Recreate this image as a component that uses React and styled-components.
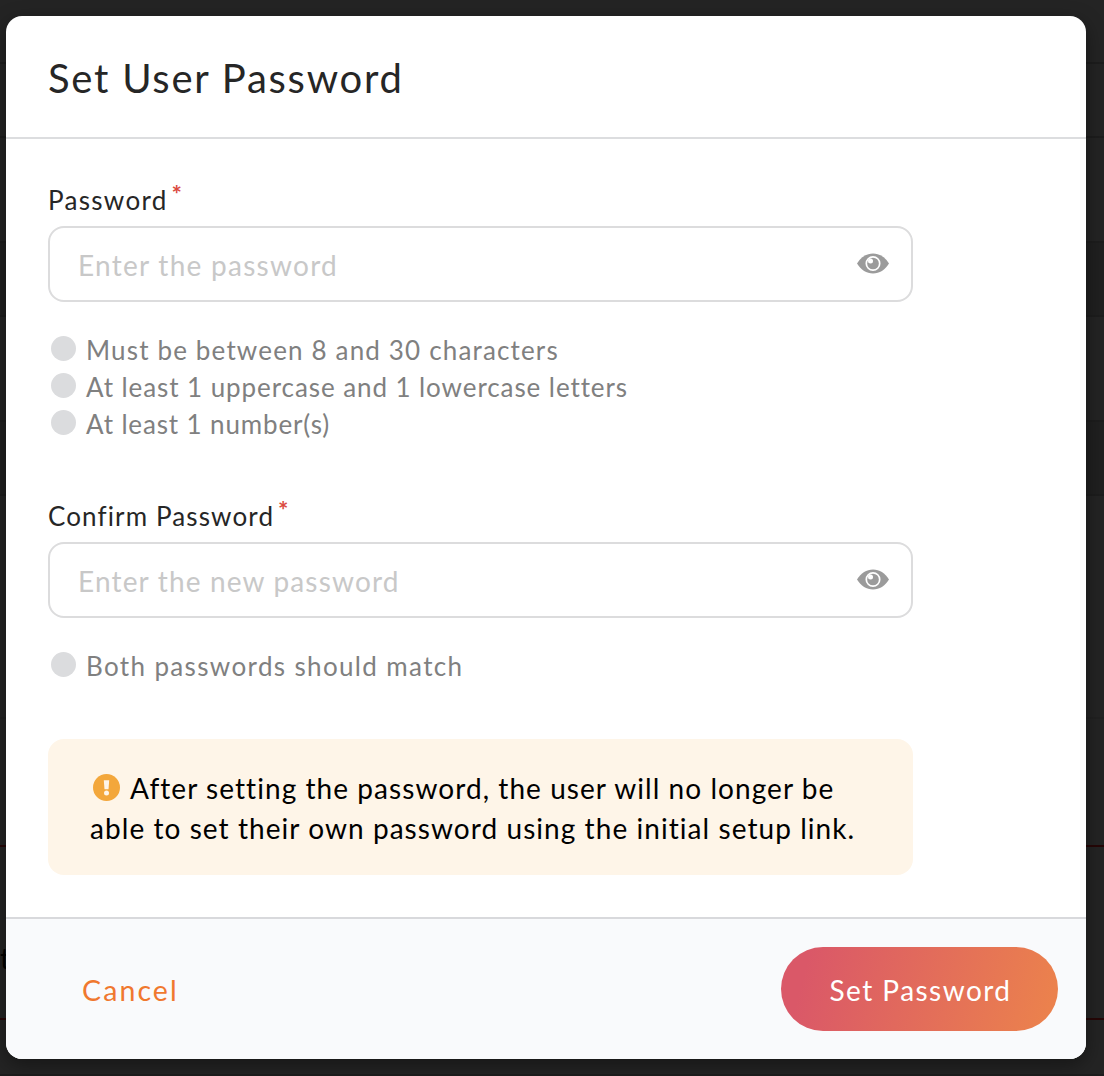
import React from "react";
import styled, { createGlobalStyle } from "styled-components";

const GlobalStyle = createGlobalStyle`
  *, *::before, *::after { box-sizing: border-box; }
  body { margin: 0; background: #242424; }
  body, button, input { font-family: Lato, "Liberation Sans", sans-serif; }
`;

const Page = styled.div`
  position: relative;
  width: 1104px;
  height: 1076px;
  overflow: hidden;
  background: #242424;
`;

const Row = styled.div`
  height: ${(p) => p.$h}px;
  background: ${(p) => p.$bg || "#242424"};
  border-bottom: 2px solid ${(p) => p.$line || "#1d1d1d"};
  display: flex;
  align-items: center;
  font-size: 28px;
  color: #000;
  & > span { padding-top: 50px; }
`;

const Dialog = styled.section`
  position: absolute;
  top: 16px;
  left: 6px;
  width: 1080px;
  height: 1043px;
  display: flex;
  flex-direction: column;
  background: #fff;
  border-radius: 16px;
  overflow: hidden;
  box-shadow: 0 6px 20px rgba(0, 0, 0, 0.4);
`;

const Header = styled.header`
  height: 123px;
  padding: 2px 42px 0;
  display: flex;
  align-items: center;
  border-bottom: 2px solid #dcdddf;
`;

const Title = styled.h1`
  margin: 0;
  font-size: 40px;
  line-height: 48px;
  font-weight: 400;
  letter-spacing: ${(p) => p.$track}px;
  color: #262626;
`;

const Body = styled.div`
  flex: 1;
  padding: 44px 42px 0;
`;

const Field = styled.div`
  width: 865px;
  height: ${(p) => p.$h}px;
`;

const Label = styled.label`
  display: flex;
  gap: 4px;
  height: 43px;
  font-size: 26px;
  line-height: 34px;
  letter-spacing: ${(p) => p.$track}px;
  color: #262626;
  white-space: nowrap;
`;

const Required = styled.span`
  color: #db4a3f;
  font-size: 20px;
  line-height: 21px;
  font-weight: 500;
  font-family: Inter, sans-serif;
  letter-spacing: 0;
`;

const InputBox = styled.div`
  height: 76px;
  padding: 0 22px 0 28px;
  display: flex;
  align-items: center;
  border: 2px solid #dcdcdd;
  border-radius: 16px;
`;

const Input = styled.input`
  flex: 1;
  min-width: 0;
  height: 40px;
  margin-top: 2px;
  padding: 0;
  border: 0;
  outline: 0;
  background: none;
  font-size: 28px;
  letter-spacing: ${(p) => p.$track}px;
  &::placeholder { color: #c8c8c8; opacity: 1; }
`;

const Rules = styled.ul`
  margin: 0;
  padding: 28px 0 0 3px;
  list-style: none;
`;

const Rule = styled.li`
  display: flex;
  align-items: center;
  gap: 10px;
  height: 37px;
  font-size: 26px;
  letter-spacing: ${(p) => p.$track}px;
  color: #808080;
  white-space: nowrap;
  & > span { padding-top: 3px; }
`;

const Dot = styled.i`
  width: 25px;
  height: 25px;
  border-radius: 50%;
  background: #dbdcde;
`;

const Notice = styled.div`
  width: 865px;
  height: 136px;
  padding: 29px 42px 0;
  border-radius: 16px;
  background: #fef5e8;
  color: #000;
  font-size: 28px;
  line-height: 40px;
`;

const NoticeLine = styled.div`
  display: flex;
  align-items: center;
  height: 40px;
  white-space: nowrap;
  letter-spacing: ${(p) => p.$track}px;
  & > svg { margin: -2px 10px 0 3px; flex: none; }
`;

const Footer = styled.footer`
  height: 142px;
  padding: 0 28px 0 76px;
  display: flex;
  align-items: center;
  justify-content: space-between;
  background: #f9fafc;
  border-top: 2px solid #d8d9dc;
`;

const Button = styled.button`
  border: 0;
  padding: 1px 0 0;
  height: 84px;
  font-size: 28px;
  letter-spacing: ${(p) => p.$track}px;
  white-space: nowrap;
`;

const CancelButton = styled(Button)`
  background: none;
  font-size: 28.5px;
  color: #f0782f;
`;

const PrimaryButton = styled(Button)`
  width: 277px;
  padding-left: 2px;
  border-radius: 42px;
  color: #fff;
  background: linear-gradient(105deg, #da5868 10%, #eb814d 95%);
`;

const Eye = () => (
  <svg width="32" height="22" viewBox="0 0 32 22">
    <path d="M0 10.500C4 4 9.500 .5 16 .5S28 4 32 10.500C28 17 22.500 20.500 16 20.500S4 17 0 10.500Z" fill="#9b9b9b" />
    <circle cx="16" cy="10.500" r="6.700" fill="#9b9b9b" stroke="#fff" strokeWidth="1.700" />
    <circle cx="13.500" cy="8" r="2.500" fill="#fff" />
  </svg>
);

const Alert = () => (
  <svg width="27" height="27" viewBox="0 0 27 27">
    <circle cx="13.500" cy="13.500" r="13.500" fill="#f3a73b" />
    <path d="M10.800 6.300h5.400l-.7 9h-4z" fill="#fef5e8" />
    <circle cx="13.500" cy="18.900" r="2.500" fill="#fef5e8" />
  </svg>
);

function PasswordField({ label, placeholder, rules, height, labelTrack, inputTrack }) {
  return (
    <Field $h={height}>
      <Label $track={labelTrack}>{label}<Required>*</Required></Label>
      <InputBox>
        <Input placeholder={placeholder} $track={inputTrack} />
        <Eye />
      </InputBox>
      <Rules>
        {rules.map(([text, track]) => (
          <Rule key={text} $track={track}><Dot /><span>{text}</span></Rule>
        ))}
      </Rules>
    </Field>
  );
}

export default function App() {
  return (
    <Page>
      <GlobalStyle />
      <Row $h={64} />
      <Row $h={74} />
      <Row $h={105} />
      <Row $h={74} $bg="#202020" />
      <Row $h={105} />
      <Row $h={74} $bg="#202020" />
      <Row $h={223} $line="#212121" />
      <Row $h={128} $line="#260606" />
      <Row $h={173} $line="#260606"><span>t</span></Row>
      <Row $h={56} />
      <Dialog>
        <Header><Title $track={1.75}>Set User Password</Title></Header>
        <Body>
          <PasswordField
            label="Password"
            placeholder="Enter the password"
            height={316}
            labelTrack={1.3}
            inputTrack={1.27}
            rules={[
              ["Must be between 8 and 30 characters", 1.16],
              ["At least 1 uppercase and 1 lowercase letters", 0.92],
              ["At least 1 number(s)", 0.86],
            ]}
          />
          <PasswordField
            label="Confirm Password"
            placeholder="Enter the new password"
            height={240}
            labelTrack={1.12}
            inputTrack={1.16}
            rules={[["Both passwords should match", 1.36]]}
          />
          <Notice>
            <NoticeLine $track={1.06}><Alert />After setting the password, the user will no longer be</NoticeLine>
            <NoticeLine $track={1.06}>able to set their own password using the initial setup link.</NoticeLine>
          </Notice>
        </Body>
        <Footer>
          <CancelButton $track={2.1}>Cancel</CancelButton>
          <PrimaryButton $track={1.45}>Set Password</PrimaryButton>
        </Footer>
      </Dialog>
    </Page>
  );
}
